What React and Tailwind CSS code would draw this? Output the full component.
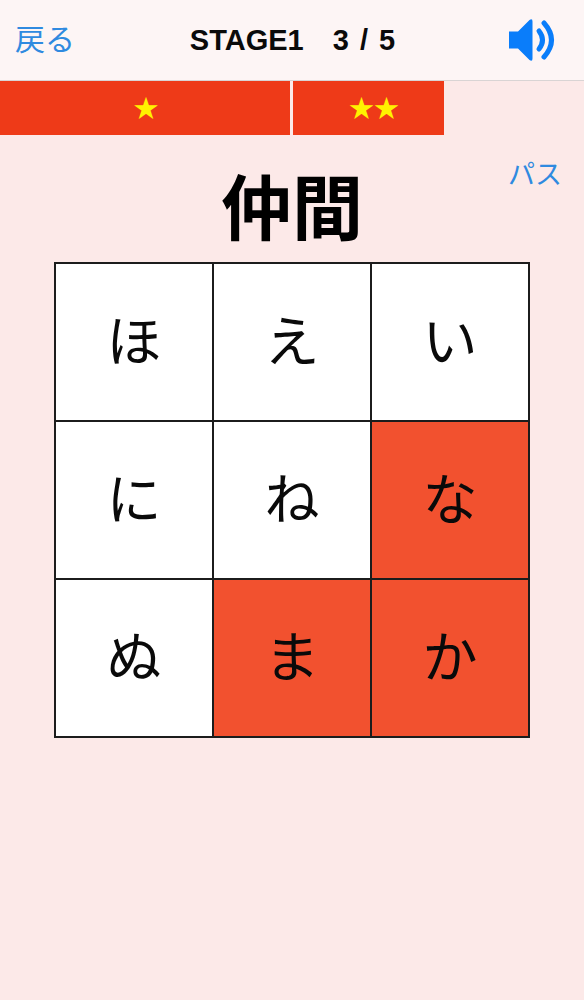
import React from "react";

const sans = "font-['Liberation_Sans','Noto_Sans_CJK_JP',sans-serif]";

const cells = [
  { kana: "ほ" },
  { kana: "え" },
  { kana: "い" },
  { kana: "に" },
  { kana: "ね" },
  { kana: "な", on: true },
  { kana: "ぬ" },
  { kana: "ま", on: true },
  { kana: "か", on: true },
];

const SpeakerIcon = () => (
  <svg width="48" height="46" viewBox="0 0 48 46" fill="none">
    <path d="M1 14.5 H10 L21.5 3 Q24.5 1 24.5 4.5 V41.5 Q24.5 45 21.5 43 L10 31.5 H1 Z" fill="#0a7dfa" />
    <path d="M31 14 Q38 23 31 32" stroke="#0a7dfa" strokeWidth="5" strokeLinecap="round" />
    <path d="M36 6 Q51 23 36 40" stroke="#0a7dfa" strokeWidth="5" strokeLinecap="round" />
  </svg>
);

const App = () => {
  return (
    <div className={`w-[584px] h-[1000px] bg-[#fce9e8] overflow-hidden ${sans}`}>
      <header className="h-[81px] bg-[#fdf5f5] border-b border-[#d9d4d4] flex items-center justify-between pl-[15px] pr-[28px]">
        <span className="w-[120px] text-[30px] leading-none text-[#2f8ae0]">戻る</span>
        <h1 className="flex gap-[29px] ml-[14px] text-[29px] leading-none font-bold text-[#0a0a0a] whitespace-pre">
          <span>STAGE1</span>
          <span className="[word-spacing:3px]">3 / 5</span>
        </h1>
        <div className="w-[120px] flex justify-end">
          <SpeakerIcon />
        </div>
      </header>

      <div className="h-[54px] flex gap-[3px]">
        <div className="w-[290px] pl-[2px] bg-[#ee3a18] flex items-center justify-center text-[25px] leading-none text-[#fff200]">★</div>
        <div className="w-[151px] pl-[11px] bg-[#ee3a18] flex items-center justify-center text-[25px] leading-none text-[#fff200]">★★</div>
      </div>

      <div className="relative h-[127px] flex items-center justify-center">
        <h2 className="mt-[21px] text-[71px] leading-none font-bold text-black">仲間</h2>
        <span className="absolute right-[22px] top-[27px] text-[27px] leading-none text-[#2f8ae0]">パス</span>
      </div>

      <div className="ml-[54px] w-[476px] grid grid-cols-[repeat(3,156px)] auto-rows-[156px] gap-[2px] p-[2px] bg-[#1c1c1c]">
        {cells.map((cell) => (
          <div
            key={cell.kana}
            className={`flex items-center justify-center text-[55px] leading-none text-[#0a0a0a] ${cell.on ? "bg-[#f2512f]" : "bg-white"}`}
          >
            {cell.kana}
          </div>
        ))}
      </div>
    </div>
  );
};

export default App;
